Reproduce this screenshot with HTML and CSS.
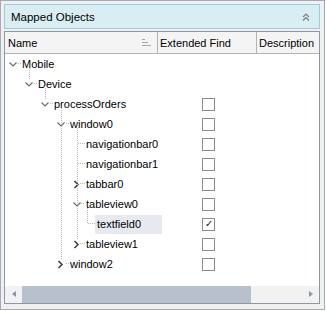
FILE: index.html
```html
<html>

<head>
  <meta charset="UTF-8">
  <meta name="viewport" content="width=device-width, initial-scale=1.0">
  <title>Mapped Objects</title>
  <link rel="stylesheet" href="styles.css">
</head>

<body>
  <section class="panel">
    <header class="title">
      <span>Mapped Objects</span>
      <svg class="collapse" width="8" height="8" viewBox="0 0 8 8">
        <path d="M1 4 L4 1 L7 4 M1 7.5 L4 4.5 L7 7.5" fill="none" stroke="#7a7a7a" stroke-width="1.1" />
      </svg>
    </header>
    <div class="grid">
      <div class="head">
        <div class="col name-col">Name
          <svg class="sort" width="9" height="7" viewBox="0 0 9 7">
            <path d="M0 0.5 H3 M0 3.5 H6 M0 6.5 H9" stroke="#a8a8a8" stroke-width="1" />
          </svg>
        </div>
        <div class="col find-col">Extended Find</div>
        <div class="col desc-col">Description</div>
      </div>
      <div class="body">
        <svg class="guides" width="160" height="232" viewBox="0 0 160 232">
          <g stroke="#b9b9b9" stroke-width="1" stroke-dasharray="1 1" fill="none">
            <path d="M11 9.5 H16" />
            <path d="M24.5 14 V26 M29 29.5 H32" />
            <path d="M40.5 34 V46 M45 49.5 H48" />
            <path d="M56.5 54 V206 M61 69.5 H64 M61 209.5 H64" />
            <path d="M72.5 74 V186 M73 89.5 H80 M73 109.5 H80 M75 129.5 H80 M76 149.5 H80 M75 189.5 H80" />
            <path d="M82.5 154 V170 M83 169.5 H91" />
          </g>
        </svg>
        <div class="row"><div class="name lv0"><svg class="tog" width="16" height="20"><path d="M3.5 8.5 L7 12 L10.5 8.5" /></svg>Mobile</div></div>
        <div class="row"><div class="name lv1"><svg class="tog" width="16" height="20"><path d="M3.5 8.5 L7 12 L10.5 8.5" /></svg>Device</div></div>
        <div class="row"><div class="name lv2"><svg class="tog" width="16" height="20"><path d="M3.5 8.5 L7 12 L10.5 8.5" /></svg>processOrders</div><div class="find"><span class="cb"></span></div></div>
        <div class="row"><div class="name lv3"><svg class="tog" width="16" height="20"><path d="M3.5 8.5 L7 12 L10.5 8.5" /></svg>window0</div><div class="find"><span class="cb"></span></div></div>
        <div class="row"><div class="name leaf4">navigationbar0</div><div class="find"><span class="cb"></span></div></div>
        <div class="row"><div class="name leaf4">navigationbar1</div><div class="find"><span class="cb"></span></div></div>
        <div class="row"><div class="name lv4"><svg class="tog shut" width="16" height="20"><path d="M4.5 7 L8 10.5 L4.5 14" /></svg>tabbar0</div><div class="find"><span class="cb"></span></div></div>
        <div class="row"><div class="name lv4"><svg class="tog" width="16" height="20"><path d="M3.5 8.5 L7 12 L10.5 8.5" /></svg>tableview0</div><div class="find"><span class="cb"></span></div></div>
        <div class="row"><div class="name leaf5"><span class="sel">textfield0</span></div><div class="find"><span class="cb">&#10003;</span></div></div>
        <div class="row"><div class="name lv4"><svg class="tog shut" width="16" height="20"><path d="M4.5 7 L8 10.5 L4.5 14" /></svg>tableview1</div><div class="find"><span class="cb"></span></div></div>
        <div class="row"><div class="name lv3"><svg class="tog shut" width="16" height="20"><path d="M4.5 7 L8 10.5 L4.5 14" /></svg>window2</div><div class="find"><span class="cb"></span></div></div>
      </div>
      <div class="hscroll">
        <span class="arrow left"></span>
        <div class="track"><div class="thumb"></div></div>
        <span class="arrow right"></span>
      </div>
    </div>
  </section>
</body>

</html>
```

FILE: styles.css
```css
* {
  margin: 0;
  padding: 0;
  box-sizing: border-box;
}

body {
  background: #ffffff;
  font-family: "Liberation Sans", Arial, sans-serif;
  font-size: 11px;
  color: #000000;
}

.panel {
  width: 325px;
  height: 310px;
  border: 1px solid #a2abb9;
  background: #f0f0f0;
  padding: 3px 4px 5px 3px;
  display: flex;
  flex-direction: column;
}

.title {
  height: 25px;
  flex: none;
  border: 1px solid #9ccbdc;
  background: #d9eef2;
  display: flex;
  align-items: center;
  justify-content: space-between;
  padding: 0 9px 0 6px;
  font-size: 11.5px;
}

.grid {
  margin-top: 2px;
  flex: 1;
  border: 1px solid #8d97a6;
  background: #ffffff;
  display: flex;
  flex-direction: column;
  overflow: hidden;
}

.head {
  height: 22px;
  flex: none;
  display: flex;
  background: #f4f4f4;
  border-bottom: 1px solid #b3b3b3;
  white-space: nowrap;
}

.col {
  flex: none;
  display: flex;
  align-items: center;
  border-right: 1px solid #b3b3b3;
  padding-left: 3px;
}

.name-col {
  width: 153px;
  justify-content: space-between;
  padding-right: 6px;
}

.find-col {
  width: 99px;
  padding-left: 2px;
}

.desc-col {
  width: 80px;
  padding-left: 2px;
}

.body {
  flex: 1;
  position: relative;
}

.guides {
  position: absolute;
  top: 0;
  left: 0;
}

.row {
  height: 20px;
  display: flex;
  align-items: center;
}

.name {
  width: 153px;
  height: 20px;
  flex: none;
  display: flex;
  align-items: center;
  white-space: nowrap;
}

.lv0 { padding-left: 1px; }
.lv1 { padding-left: 17px; }
.lv2 { padding-left: 33px; }
.lv3 { padding-left: 49px; }
.lv4 { padding-left: 65px; }
.leaf4 { padding-left: 81px; }
.leaf5 { padding-left: 90px; }

.tog {
  flex: none;
  fill: none;
  stroke: #6a6a6a;
  stroke-width: 1.1;
}

.tog.shut {
  stroke: #3c3c3c;
  stroke-width: 1.5;
}

.sel {
  background: #e6eaf0;
  height: 19px;
  line-height: 19px;
  padding: 0 21px 0 2px;
}

.find {
  width: 99px;
  flex: none;
  display: flex;
  justify-content: center;
  padding-left: 2px;
}

.cb {
  width: 13px;
  height: 13px;
  border: 1px solid #8c8c8c;
  background: #ffffff;
  display: flex;
  align-items: center;
  justify-content: center;
  font-size: 10px;
  line-height: 1;
  color: #202020;
}

.hscroll {
  height: 17px;
  flex: none;
  background: #f2f2f2;
  display: flex;
  align-items: center;
}

.arrow {
  width: 17px;
  height: 17px;
  position: relative;
  flex: none;
}

.arrow::before {
  content: "";
  position: absolute;
  top: 5px;
  border-top: 3.5px solid transparent;
  border-bottom: 3.5px solid transparent;
}

.arrow.left::before {
  left: 7px;
  border-right: 4px solid #8a94a4;
}

.arrow.right::before {
  left: 7px;
  border-left: 4px solid #8a94a4;
}

.track {
  flex: 1;
  height: 17px;
}

.thumb {
  width: 229px;
  height: 17px;
  background: #b8c0cb;
}
```
